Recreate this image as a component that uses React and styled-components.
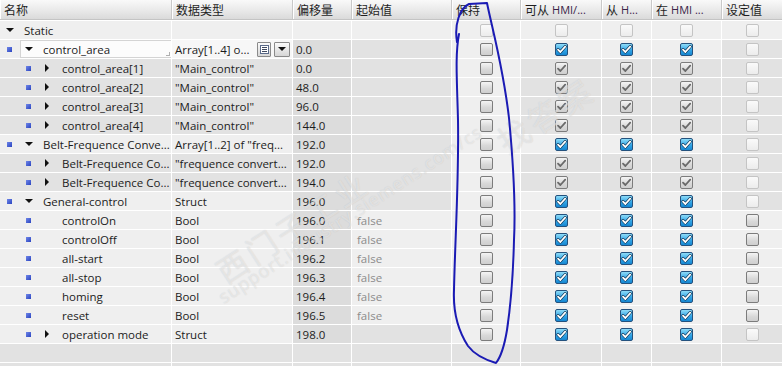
import React from "react";
import styled, { createGlobalStyle } from "styled-components";

const Global = createGlobalStyle`
  html, body {
    margin: 0;
    padding: 0;
    background: #ffffff;
    width: 782px;
    height: 366px;
    overflow: hidden;
  }
  body {
    font-family: "Open Sans", "Noto Sans CJK SC", sans-serif;
  }
`;

const COLS = "171px 120px 58px 99px 68px 80px 49px 69px 60px";

const tones = {
  light: "#efefef",
  ro: "#e2e2e2",
  off: "#dcdcdc",
  sel: "#f7f7f7",
};

const Page = styled.div`
  position: relative;
  width: 782px;
  height: 366px;
  overflow: hidden;
  background: #ffffff;
`;

const Table = styled.div`
  display: flex;
  flex-direction: column;
  gap: 1px;
  background: #ffffff;
`;

const Row = styled.div`
  display: grid;
  grid-template-columns: ${COLS};
  column-gap: 1px;
  height: 18px;
`;

const HeaderRow = styled.div`
  display: grid;
  grid-template-columns: 172px 121px 59px 100px 69px 81px 50px 70px 60px;
  height: 19px;
  margin-bottom: 1px;
  background: linear-gradient(#f9f9f9, #e9e9e9 55%, #dadada);
  border-bottom: 1px solid #c4c4c4;
`;

const HeadCell = styled.div`
  display: flex;
  align-items: center;
  padding-left: 4px;
  font-family: "Noto Sans CJK SC", sans-serif;
  font-size: 12px;
  color: #1e1e1e;
  border-right: 1px solid #c9c9c9;
  box-shadow: inset 1px 0 0 #ffffff;
  white-space: nowrap;
  overflow: hidden;

  &:last-child {
    border-right: none;
  }
`;

const Latin = styled.span`
  font-family: "Open Sans", sans-serif;
  font-size: 11px;
  color: #3b2347;
  margin-left: 3px;
`;

const Cell = styled.div`
  display: flex;
  align-items: center;
  justify-content: ${(p) => (p.$center ? "center" : "flex-start")};
  padding-left: ${(p) => (p.$center ? 0 : p.$pad ?? 3)}px;
  background: ${(p) => tones[p.$tone] || tones.light};
  font-size: 11.5px;
  color: ${(p) => p.$color || "#1c1c1c"};
  white-space: nowrap;
  overflow: hidden;
`;

const Slot = styled.div`
  flex: none;
  width: ${(p) => p.$w}px;
  height: 100%;
  display: flex;
  align-items: center;
  padding-left: ${(p) => p.$pad || 0}px;
  box-sizing: border-box;
`;

const Square = styled.div`
  width: 5px;
  height: 5px;
  background: linear-gradient(135deg, #6f86e8, #2a44c0);
`;

const TriDown = styled.div`
  width: 0;
  height: 0;
  border-left: 4px solid transparent;
  border-right: 4px solid transparent;
  border-top: 4px solid #111;
`;

const TriRight = styled.div`
  width: 0;
  height: 0;
  margin-left: 1px;
  border-top: 4px solid transparent;
  border-bottom: 4px solid transparent;
  border-left: 4px solid #111;
`;

const NameText = styled.span`
  margin-left: ${(p) => (p.$sel ? 3 : 5)}px;
`;

const SelBox = styled.div`
  position: relative;
  flex: 1;
  align-self: stretch;
  display: flex;
  align-items: center;
  background: #fcfcfc;
  border: 1px solid #d4d4d4;
  border-right: none;
  margin-left: 1px;
`;

const Grip = styled.div`
  position: absolute;
  right: 1px;
  bottom: 1px;
  width: 3px;
  height: 3px;
  border-right: 1px solid #b0b0b0;
  border-bottom: 1px solid #b0b0b0;
`;

const TypeText = styled.span`
  flex: 1;
`;

const MiniBtn = styled.div`
  flex: none;
  width: ${(p) => p.$w}px;
  height: 15px;
  margin-right: ${(p) => p.$mr || 0}px;
  box-sizing: border-box;
  border: 1px solid #8a8a8a;
  border-radius: 1px;
  background: linear-gradient(#fafafa, #d6d6d6);
  display: flex;
  align-items: center;
  justify-content: center;
`;

const Box = styled.div`
  width: 13px;
  height: 13px;
  box-sizing: border-box;
  border-radius: 2px;
  display: flex;
  align-items: center;
  justify-content: center;
  border: 1px solid
    ${(p) =>
      p.$v === "blue" ? "#24527e" : p.$v === "dis" ? "#c4c4c4" : "#7c7c7c"};
  background: ${(p) =>
    p.$v === "blue"
      ? "linear-gradient(#8fdcf8, #34a6e6 55%, #1687d2)"
      : p.$v === "dis"
      ? "linear-gradient(#fafafa, #ececec)"
      : "linear-gradient(#f4f4f4, #d8d8d8 60%, #cfcfcf)"};
`;

const Check = ({ v }) => (
  <Box $v={v}>
    {(v === "blue" || v === "gray") && (
      <svg width="11" height="11" viewBox="0 0 11 11">
        {v === "blue" && (
          <path
            d="M2 5.6 L4.4 8 L9.2 2.6"
            fill="none"
            stroke="#0c3050"
            strokeWidth="3"
            strokeLinecap="round"
            strokeLinejoin="round"
          />
        )}
        <path
          d="M2 5.6 L4.4 8 L9.2 2.6"
          fill="none"
          stroke={v === "blue" ? "#ffffff" : "#6a6a6a"}
          strokeWidth="1.8"
          strokeLinecap="round"
          strokeLinejoin="round"
        />
      </svg>
    )}
  </Box>
);

const Ellipse = styled.svg`
  position: absolute;
  left: 0;
  top: 0;
  pointer-events: none;
`;

const Mark = styled.div`
  position: absolute;
  left: ${(p) => p.$x}px;
  top: ${(p) => p.$y}px;
  transform: translate(-50%, -50%) rotate(-33deg);
  font-family: ${(p) => (p.$cjk ? '"Noto Sans CJK SC", sans-serif' : '"Open Sans", sans-serif')};
  font-size: ${(p) => p.$size}px;
  letter-spacing: ${(p) => p.$ls || 0}px;
  color: rgba(255, 255, 255, 0.45);
  text-shadow: 0 0 1px rgba(120, 120, 120, 0.28);
  white-space: nowrap;
  pointer-events: none;
`;

const arr = (off, idx) => ({
  name: `control_area[${idx}]`,
  level: 2,
  exp: "right",
  type: '"Main_control"',
  off,
  ro: true,
  cb: ["empty", "gray", "gray", "gray", "dis"],
});

const belt = (off) => ({
  name: "Belt-Frequence Co...",
  level: 2,
  exp: "right",
  type: '"frequence convert...',
  off,
  ro: true,
  cb: ["empty", "gray", "gray", "gray", "dis"],
});

const bool = (name, off) => ({
  name,
  level: 2,
  type: "Bool",
  off,
  start: "false",
  cb: ["empty", "blue", "blue", "blue", "empty"],
});

const rows = [
  {
    name: "Static",
    level: 0,
    exp: "down",
    static: true,
    cb: ["dis", "dis", "dis", "dis", "dis"],
  },
  {
    name: "control_area",
    level: 1,
    exp: "down",
    type: "Array[1..4] o...",
    off: "0.0",
    sel: true,
    cb: ["empty", "blue", "blue", "blue", "dis"],
  },
  arr("0.0", 1),
  arr("48.0", 2),
  arr("96.0", 3),
  arr("144.0", 4),
  {
    name: "Belt-Frequence Conve...",
    level: 1,
    exp: "down",
    type: 'Array[1..2] of "freq...',
    off: "192.0",
    cb: ["empty", "blue", "blue", "blue", "dis"],
  },
  belt("192.0"),
  belt("194.0"),
  {
    name: "General-control",
    level: 1,
    exp: "down",
    type: "Struct",
    off: "196.0",
    cb: ["empty", "blue", "blue", "blue", "dis"],
  },
  bool("controlOn", "196.0"),
  bool("controlOff", "196.1"),
  bool("all-start", "196.2"),
  bool("all-stop", "196.3"),
  bool("homing", "196.4"),
  bool("reset", "196.5"),
  {
    name: "operation mode",
    level: 2,
    exp: "right",
    type: "Struct",
    off: "198.0",
    cb: ["empty", "blue", "blue", "blue", "dis"],
  },
];

const NameCell = ({ r }) => {
  const label = (
    <>
      <Slot $w={19} $pad={r.sel ? 4 : 6}>
        {r.exp === "down" && <TriDown />}
        {r.exp === "right" && <TriRight />}
      </Slot>
      <NameText $sel={r.sel}>{r.name}</NameText>
    </>
  );
  return (
    <Cell $tone={r.ro ? "ro" : "light"} $pad={0}>
      {r.level > 1 && <Slot $w={19 * (r.level - 1)} />}
      {r.level > 0 && (
        <Slot $w={19} $pad={7}>
          <Square />
        </Slot>
      )}
      {r.sel ? (
        <SelBox>
          {label}
          <Grip />
        </SelBox>
      ) : (
        label
      )}
    </Cell>
  );
};

const ListIcon = () => (
  <svg width="9" height="9" viewBox="0 0 9 9">
    <rect x="0.5" y="0.5" width="8" height="8" fill="#ffffff" stroke="#5a6a8a" />
    <path d="M2 2.5h5M2 4.5h5M2 6.5h5" stroke="#404a60" strokeWidth="1" />
  </svg>
);

const DataRow = ({ r }) => {
  const base = r.ro ? "ro" : "light";
  return (
    <Row>
      <NameCell r={r} />
      <Cell $tone={r.sel ? "sel" : base}>
        <TypeText>{r.type}</TypeText>
        {r.sel && (
          <>
            <MiniBtn $w={14} $mr={3}>
              <ListIcon />
            </MiniBtn>
            <MiniBtn $w={16} $mr={2}>
              <TriDown />
            </MiniBtn>
          </>
        )}
      </Cell>
      <Cell $tone={r.static ? "light" : "off"}>{r.off}</Cell>
      <Cell $tone={r.start || r.static ? "light" : "ro"} $color="#8c8c8c" $pad={5}>
        {r.start}
      </Cell>
      {r.cb.map((v, i) => (
        <Cell
          key={i}
          $center
          $tone={
            i === 0 || r.static
              ? "light"
              : i === 4
              ? v === "dis"
                ? "ro"
                : "light"
              : r.ro
              ? "ro"
              : "light"
          }
        >
          <Check v={v} />
        </Cell>
      ))}
    </Row>
  );
};

const EmptyRow = () => (
  <Row>
    {Array.from({ length: 9 }).map((_, i) => (
      <Cell key={i} $tone="ro" />
    ))}
  </Row>
);

const heads = [
  ["名称"],
  ["数据类型"],
  ["偏移量"],
  ["起始值"],
  ["保持"],
  ["可从", "HMI/..."],
  ["从", "H..."],
  ["在", "HMI ..."],
  ["设定值"],
];

export default function App() {
  return (
    <Page>
      <Global />
      <HeaderRow>
        {heads.map(([zh, en], i) => (
          <HeadCell key={i}>
            {zh}
            {en && <Latin>{en}</Latin>}
          </HeadCell>
        ))}
      </HeaderRow>
      <Table>
        {rows.map((r, i) => (
          <DataRow key={i} r={r} />
        ))}
        <EmptyRow />
        <EmptyRow />
      </Table>

      <Mark $x={292} $y={226} $size={31} $ls={4} $cjk>
        西门子工业
      </Mark>
      <Mark $x={350} $y={214} $size={18} $ls={1}>
        support.industry.siemens.com/cs
      </Mark>
      <Mark $x={545} $y={114} $size={32} $ls={4} $cjk>
        找答案
      </Mark>

      <Ellipse width="782" height="366" viewBox="0 0 782 366">
        <path
          d="M457 42 C454 24 460 8 469 4 L487 3 C492 28 503 66 509 118 C513 160 516 200 514 240 C513 280 510 310 507 330 C504 348 500 358 496 363 C486 360 474 354 468 346 C459 332 453 312 454 290 C455 240 459 180 458 120 C457 80 455 55 459 34"
          fill="none"
          stroke="#1b1bb4"
          strokeWidth="2"
          strokeLinecap="round"
          strokeLinejoin="round"
        />
      </Ellipse>
    </Page>
  );
}
